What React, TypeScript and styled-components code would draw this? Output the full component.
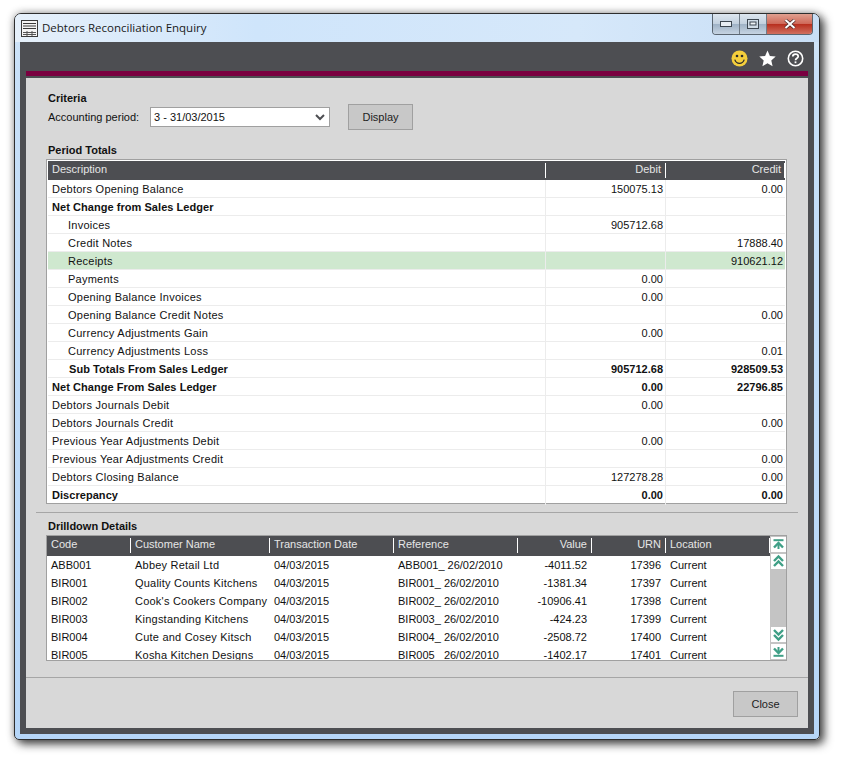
import React from 'react';
import styled, { createGlobalStyle } from 'styled-components';

const periodRows = [
  { label: 'Debtors Opening Balance', debit: '150075.13', credit: '0.00' },
  { label: 'Net Change from Sales Ledger', bold: true },
  { label: 'Invoices', debit: '905712.68', indent: true },
  { label: 'Credit Notes', credit: '17888.40', indent: true },
  { label: 'Receipts', credit: '910621.12', indent: true, selected: true },
  { label: 'Payments', debit: '0.00', indent: true },
  { label: 'Opening Balance Invoices', debit: '0.00', indent: true },
  { label: 'Opening Balance Credit Notes', credit: '0.00', indent: true },
  { label: 'Currency Adjustments Gain', debit: '0.00', indent: true },
  { label: 'Currency Adjustments Loss', credit: '0.01', indent: true },
  { label: 'Sub Totals From Sales Ledger', debit: '905712.68', credit: '928509.53', indent: true, bold: true },
  { label: 'Net Change From Sales Ledger', debit: '0.00', credit: '22796.85', bold: true },
  { label: 'Debtors Journals Debit', debit: '0.00' },
  { label: 'Debtors Journals Credit', credit: '0.00' },
  { label: 'Previous Year Adjustments Debit', debit: '0.00' },
  { label: 'Previous Year Adjustments Credit', credit: '0.00' },
  { label: 'Debtors Closing Balance', debit: '127278.28', credit: '0.00' },
  { label: 'Discrepancy', debit: '0.00', credit: '0.00', bold: true },
];

const drilldownRows = [
  ['ABB001', 'Abbey Retail Ltd', '-4011.52', '17396'],
  ['BIR001', 'Quality Counts Kitchens', '-1381.34', '17397'],
  ['BIR002', "Cook's Cookers Company", '-10906.41', '17398'],
  ['BIR003', 'Kingstanding Kitchens', '-424.23', '17399'],
  ['BIR004', 'Cute and Cosey Kitsch', '-2508.72', '17400'],
  ['BIR005', 'Kosha Kitchen Designs', '-1402.17', '17401'],
];

const ScrollIcon: React.FC<{ kind: 'first' | 'prev' | 'next' | 'last' }> = ({ kind }) => (
  <svg width="15" height="15" viewBox="0 0 15 15" fill="none" stroke="#3f9f86" strokeWidth="2.4">
    {kind === 'first' && (
      <>
        <path d="M2.5 3.2h10" strokeWidth="2" />
        <path d="M3 10.5l4.5-4.5 4.5 4.5" />
        <path d="M7.5 7v5" strokeWidth="2" />
      </>
    )}
    {kind === 'prev' && (
      <>
        <path d="M3 7l4.5-4.5L12 7" />
        <path d="M3 12l4.5-4.5L12 12" />
      </>
    )}
    {kind === 'next' && (
      <>
        <path d="M3 3l4.5 4.5L12 3" />
        <path d="M3 8l4.5 4.5L12 8" />
      </>
    )}
    {kind === 'last' && (
      <>
        <path d="M2.5 11.8h10" strokeWidth="2" />
        <path d="M3 4.5L7.5 9 12 4.5" />
        <path d="M7.5 3v5" strokeWidth="2" />
      </>
    )}
  </svg>
);

const App: React.FC = () => (
  <>
    <GlobalStyle />
    <Desktop>
      <Window>
        <TitleBar>
          <svg width="17" height="17" viewBox="0 0 17 17" fill="none">
            <rect x="0.5" y="0.5" width="16" height="16" fill="#f4f4f4" stroke="#3a3a3a" />
            <path d="M2 3.5h13M2 6h13M2 8.5h13" stroke="#3a3a3a" />
            <path d="M2 12.5h13M2 14.5h13M6 11v5M11 11v5" stroke="#555" />
          </svg>
          <WindowTitle>Debtors Reconciliation Enquiry</WindowTitle>
          <WindowButtons>
            <WindowButton title="Minimize">
              <svg width="12" height="6" viewBox="0 0 12 6">
                <rect x="0.5" y="0.5" width="11" height="5" fill="#e8eef4" stroke="#3c4650" />
              </svg>
            </WindowButton>
            <WindowButton title="Maximize">
              <svg width="12" height="10" viewBox="0 0 12 10" fill="none">
                <rect x="0.5" y="0.5" width="11" height="9" stroke="#3c4650" fill="#cfdbe6" />
                <rect x="3" y="3" width="6" height="3" stroke="#3c4650" fill="#eef3f7" />
              </svg>
            </WindowButton>
            <CloseButton title="Close">
              <svg width="12" height="10" viewBox="0 0 12 10" fill="none">
                <path d="M1.5 1l9 8M10.5 1l-9 8" stroke="#4a2a2a" strokeWidth="3.4" />
                <path d="M1.5 1l9 8M10.5 1l-9 8" stroke="#fff" strokeWidth="2" />
              </svg>
            </CloseButton>
          </WindowButtons>
        </TitleBar>

        <Panel>
          <IconBar>
            <svg width="17" height="17" viewBox="0 0 17 17">
              <circle cx="8.5" cy="8.5" r="8" fill="#f5cf3c" />
              <circle cx="6" cy="6" r="1.3" fill="#2b2b2b" />
              <circle cx="11" cy="6" r="1.3" fill="#2b2b2b" />
              <path d="M3.8 9.6c.8 2.6 2.6 3.7 4.7 3.7s3.9-1.1 4.7-3.7" fill="none" stroke="#2b2b2b" strokeWidth="1.3" />
            </svg>
            <svg width="17" height="17" viewBox="0 0 17 17">
              <path d="M8.5.5l2.4 5.4 5.8.6-4.4 3.9 1.3 5.8-5.1-3-5.1 3 1.3-5.8L.3 6.5l5.8-.6z" fill="#fff" />
            </svg>
            <svg width="17" height="17" viewBox="0 0 17 17" fill="none" stroke="#fff">
              <circle cx="8.5" cy="8.5" r="7.2" strokeWidth="1.6" />
              <path d="M5.8 6.6c0-1.6 1.2-2.4 2.7-2.4s2.7.8 2.7 2.2c0 1.9-2.7 1.9-2.7 3.9" strokeWidth="1.7" />
              <path d="M8.5 11.4v1.8" strokeWidth="1.8" />
            </svg>
          </IconBar>
          <AccentBar />

          <Content>
            <CriteriaSection>
              <SectionTitle>Criteria</SectionTitle>
              <CriteriaRow>
                <FieldLabel>Accounting period:</FieldLabel>
                <SelectBox>
                  <span>3 - 31/03/2015</span>
                  <svg width="10" height="7" viewBox="0 0 10 7" fill="none" stroke="#4d4e52" strokeWidth="2">
                    <path d="M1 1l4 4 4-4" />
                  </svg>
                </SelectBox>
                <ActionButton>Display</ActionButton>
              </CriteriaRow>
            </CriteriaSection>

            <PeriodSection>
              <SectionTitle>Period Totals</SectionTitle>
              <PeriodFrame>
                <PeriodHeader>
                  <HeadCell>Description</HeadCell>
                  <HeadCell $right $sep>Debit</HeadCell>
                  <HeadCell $right $sep $end>Credit</HeadCell>
                </PeriodHeader>
                {periodRows.map((row, i) => (
                  <PeriodRow key={i} $selected={row.selected} $bold={row.bold}>
                    <DescCell $indent={row.indent} $bold={row.bold}>{row.label}</DescCell>
                    <AmountCell>{row.debit}</AmountCell>
                    <AmountCell>{row.credit}</AmountCell>
                  </PeriodRow>
                ))}
              </PeriodFrame>
            </PeriodSection>

            <SectionRule />

            <DrilldownSection>
              <SectionTitle>Drilldown Details</SectionTitle>
              <DrilldownFrame>
                <DrilldownTable>
                  <DrilldownHeader>
                    <HeadCell>Code</HeadCell>
                    <DrillHead $sep>Customer Name</DrillHead>
                    <DrillHead $sep>Transaction Date</DrillHead>
                    <DrillHead $sep>Reference</DrillHead>
                    <HeadCell $sep $right>Value</HeadCell>
                    <HeadCell $sep $right>URN</HeadCell>
                    <DrillHead $sep $end>Location</DrillHead>
                  </DrilldownHeader>
                  {drilldownRows.map((row) => (
                    <DrilldownRow key={row[0]}>
                      <DrillCell>{row[0]}</DrillCell>
                      <DrillCell $inset $wide>{row[1]}</DrillCell>
                      <DrillCell $inset>04/03/2015</DrillCell>
                      <DrillCell $inset>{row[0]}_ 26/02/2010</DrillCell>
                      <DrillCell $right>{row[2]}</DrillCell>
                      <DrillCell $right>{row[3]}</DrillCell>
                      <DrillCell $inset>Current</DrillCell>
                    </DrilldownRow>
                  ))}
                </DrilldownTable>
                <ScrollBar>
                  <ScrollGroup>
                    <ScrollButton><ScrollIcon kind="first" /></ScrollButton>
                    <ScrollButton><ScrollIcon kind="prev" /></ScrollButton>
                  </ScrollGroup>
                  <ScrollGroup>
                    <ScrollButton><ScrollIcon kind="next" /></ScrollButton>
                    <ScrollButton><ScrollIcon kind="last" /></ScrollButton>
                  </ScrollGroup>
                </ScrollBar>
              </DrilldownFrame>
            </DrilldownSection>

            <Footer>
              <ActionButton>Close</ActionButton>
            </Footer>
          </Content>
        </Panel>
      </Window>
    </Desktop>
  </>
);

const GlobalStyle = createGlobalStyle`
  html, body {
    margin: 0;
    padding: 0;
    background: #fff;
  }
  body {
    font-family: "Liberation Sans", Arial, sans-serif;
    font-size: 11px;
    color: #111;
  }
`;

const Desktop = styled.div`
  width: 841px;
  height: 758px;
  padding: 13px 0 0 14px;
  box-sizing: border-box;
  overflow: hidden;
`;

const Window = styled.div`
  width: 806px;
  height: 727px;
  box-sizing: border-box;
  border: 1px solid #2e2e2e;
  border-radius: 7px 7px 5px 5px;
  padding: 0 5px 5px;
  background: linear-gradient(180deg, #d4e6f7 0%, #c8e0f8 8%, #b6d6f8 100%);
  box-shadow: 4px 4px 10px rgba(0, 0, 0, 0.7), 0 0 8px rgba(0, 0, 0, 0.3);
  display: flex;
  flex-direction: column;
`;

const TitleBar = styled.div`
  height: 28px;
  display: flex;
  align-items: flex-start;
  background: linear-gradient(90deg, #e6f0fa 0%, #cfe5fb 30%, #d6e8fa 70%, #c8def5 100%);
  margin: 0 -5px;
  padding: 0 6px 0 6px;
  border-radius: 6px 6px 0 0;

  > svg {
    margin-top: 6px;
  }
`;

const WindowTitle = styled.div`
  margin: 6px 0 0 4px;
  font-family: "Open Sans", "Noto Sans", sans-serif;
  font-size: 11.5px;
  line-height: 16px;
  color: #1a1a1a;
  flex: 1;
`;

const WindowButtons = styled.div`
  display: flex;
  height: 20px;
  border: 1px solid #5a6570;
  border-top: none;
  border-radius: 0 0 4px 4px;
  overflow: hidden;
`;

const WindowButton = styled.div`
  width: 26px;
  display: flex;
  align-items: center;
  justify-content: center;
  border-right: 1px solid #6f7b87;
  background: linear-gradient(180deg, #dde6ef 0%, #c3d1df 48%, #9fb2c6 52%, #c6d4e2 100%);
`;

const CloseButton = styled(WindowButton)`
  width: 45px;
  border-right: none;
  background: linear-gradient(180deg, #e0a090 0%, #cf6a5a 48%, #b8301f 52%, #d07060 100%);
`;

const Panel = styled.div`
  flex: 1;
  display: flex;
  flex-direction: column;
  min-height: 0;
  background: #4d4e52;
  padding: 0 6px 6px;
`;

const IconBar = styled.div`
  height: 29px;
  box-sizing: border-box;
  display: flex;
  align-items: center;
  justify-content: flex-end;
  gap: 11px;
  padding: 4px 4px 0 0;
`;

const AccentBar = styled.div`
  height: 5px;
  background: #7a0040;
  margin-bottom: 2px;
`;

const Content = styled.div`
  flex: 1;
  min-height: 0;
  background: #d8d8d8;
  display: flex;
  flex-direction: column;
`;

const SectionTitle = styled.div`
  font-weight: bold;
  font-size: 11px;
  line-height: 14px;
  color: #111;
  padding-left: 22px;
`;

const CriteriaSection = styled.div`
  padding-top: 13px;
`;

const CriteriaRow = styled.div`
  display: flex;
  align-items: center;
  padding-left: 22px;
  margin-top: -1px;
`;

const FieldLabel = styled.div`
  width: 102px;
`;

const SelectBox = styled.div`
  width: 180px;
  height: 20px;
  box-sizing: border-box;
  border: 1px solid #a0a0a0;
  background: #fff;
  display: flex;
  align-items: center;
  justify-content: space-between;
  padding: 0 4px 0 3px;
  margin-right: 18px;
`;

const ActionButton = styled.div`
  width: 65px;
  height: 26px;
  box-sizing: border-box;
  border: 1px solid #a0a0a0;
  background: #c8c8c8;
  color: #222;
  display: flex;
  align-items: center;
  justify-content: center;
`;

const PeriodSection = styled.div`
  margin-top: 13px;
`;

const PeriodFrame = styled.div`
  margin: 2px 0 0 20px;
  width: 741px;
  box-sizing: border-box;
  border: 1px solid #a0a0a0;
  padding: 1px 1px 0;
  background: #fff;
`;

const PeriodColumns = styled.div`
  display: grid;
  grid-template-columns: 497px 120px 120px;
`;

const PeriodHeader = styled(PeriodColumns)`
  height: 19px;
  background: #4d4e52;
`;

const HeadCell = styled.div<{ $right?: boolean; $sep?: boolean; $end?: boolean }>`
  color: #e6e6e6;
  line-height: 17px;
  padding: 0 4px;
  overflow: hidden;
  white-space: nowrap;
  text-align: ${({ $right }) => ($right ? 'right' : 'left')};
  background:
    ${({ $sep }) => ($sep ? 'linear-gradient(#fff, #fff) left 2px / 1px 15px no-repeat,' : '')}
    ${({ $end }) => ($end ? 'linear-gradient(#fff, #fff) right 2px / 1px 15px no-repeat,' : '')}
    none;
`;

const DrillHead = styled(HeadCell)`
  padding-left: 5px;
`;

const PeriodRow = styled(PeriodColumns)<{ $selected?: boolean; $bold?: boolean }>`
  height: 18px;
  box-sizing: border-box;
  border-bottom: 1px solid #ececec;
  background: ${({ $selected }) => ($selected ? '#cfe8cf' : '#fff')};
  font-weight: ${({ $bold }) => ($bold ? 'bold' : 'normal')};
  line-height: 19px;

  &:last-child {
    height: 17px;
    border-bottom: none;
  }
`;

const DescCell = styled.div<{ $indent?: boolean; $bold?: boolean }>`
  padding-left: ${({ $indent, $bold }) => ($indent ? ($bold ? '21px' : '20px') : '4px')};
  letter-spacing: ${({ $bold }) => ($bold ? '0.05px' : '0.25px')};
  white-space: nowrap;
`;

const AmountCell = styled.div`
  border-left: 1px solid #ececec;
  padding-right: 2px;
  text-align: right;
`;

const SectionRule = styled.div`
  margin: 8px 10px 0 10px;
  height: 1px;
  background: #a6a6a6;
`;

const DrilldownSection = styled.div`
  margin-top: 6px;
`;

const DrilldownFrame = styled.div`
  margin: 2px 0 0 20px;
  width: 741px;
  height: 126px;
  box-sizing: border-box;
  border: 1px solid #a0a0a0;
  background: #fff;
  display: flex;
  overflow: hidden;
`;

const DrilldownTable = styled.div`
  width: 723px;
`;

const DrillColumns = styled.div`
  display: grid;
  grid-template-columns: 83px 139px 124px 124px 74px 74px 105px;
`;

const DrilldownHeader = styled(DrillColumns)`
  height: 20px;
  background: #4d4e52;
`;

const DrilldownRow = styled(DrillColumns)`
  height: 18px;
  line-height: 18px;
`;

const DrillCell = styled.div<{ $right?: boolean; $wide?: boolean; $inset?: boolean }>`
  padding: 0 4px 0 ${({ $inset }) => ($inset ? '5px' : '4px')};
  white-space: nowrap;
  overflow: hidden;
  letter-spacing: ${({ $wide }) => ($wide ? '0.22px' : '0')};
  text-align: ${({ $right }) => ($right ? 'right' : 'left')};
`;

const ScrollBar = styled.div`
  width: 16px;
  background: #c4c4c4;
  padding: 1px 0 1px 1px;
  box-sizing: border-box;
  display: flex;
  flex-direction: column;
  justify-content: space-between;
`;

const ScrollGroup = styled.div`
  display: flex;
  flex-direction: column;
  gap: 2px;
`;

const ScrollButton = styled.div`
  height: 15px;
  background: #fff;
  display: flex;
  align-items: center;
  justify-content: center;
`;

const Footer = styled.div`
  margin-top: 16px;
  border-top: 1px solid #a6a6a6;
  padding: 13px 10px 0 0;
  display: flex;
  justify-content: flex-end;
`;

export default App;
